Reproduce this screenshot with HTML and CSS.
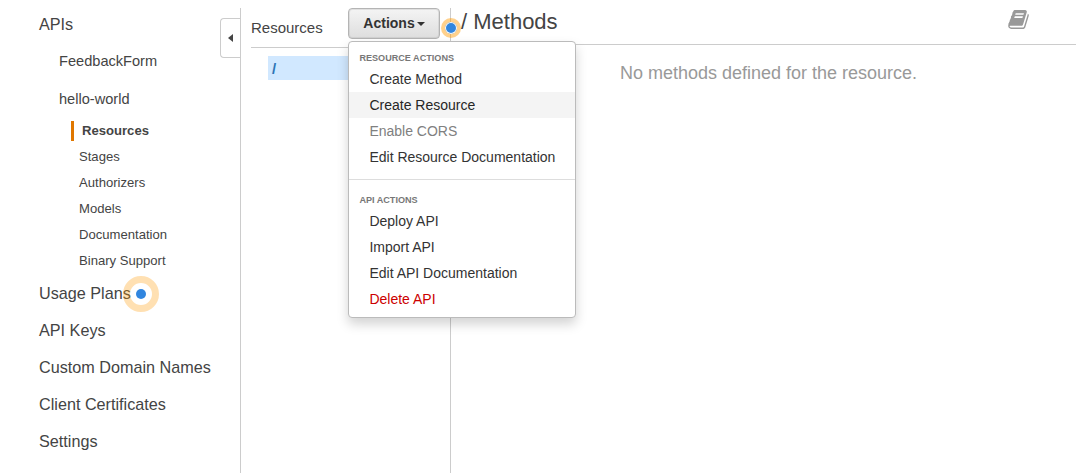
FILE: index.html
```html
<!DOCTYPE html>
<html lang="en">
<head>
<meta charset="utf-8">
<title>API Gateway</title>
<link rel="stylesheet" href="styles.css">
</head>
<body>
<div class="app">
  <nav class="sidebar">
    <a class="nav-top">APIs</a>
    <div class="api-list">
      <a class="api-name">FeedbackForm</a>
      <a class="api-name">hello-world</a>
    </div>
    <div class="api-sections">
      <a class="section active">Resources</a>
      <a class="section">Stages</a>
      <a class="section">Authorizers</a>
      <a class="section">Models</a>
      <a class="section">Documentation</a>
      <a class="section">Binary Support</a>
    </div>
    <a class="nav-top"><span class="anchor">Usage Plans<i class="hotspot hotspot-large"></i></span></a>
    <a class="nav-top">API Keys</a>
    <a class="nav-top">Custom Domain Names</a>
    <a class="nav-top">Client Certificates</a>
    <a class="nav-top">Settings</a>
    <button class="collapse" aria-label="Collapse"><i class="arrow-left"></i></button>
  </nav>
  <section class="resources">
    <header class="resources-head">
      <span class="resources-title">Resources</span>
      <div class="dropdown">
        <button class="actions">Actions<i class="caret"></i></button>
        <div class="menu">
          <div class="menu-label">RESOURCE ACTIONS</div>
          <a class="item">Create Method</a>
          <a class="item hover">Create Resource</a>
          <a class="item disabled">Enable CORS</a>
          <a class="item">Edit Resource Documentation</a>
          <div class="divider"></div>
          <div class="menu-label">API ACTIONS</div>
          <a class="item">Deploy API</a>
          <a class="item">Import API</a>
          <a class="item">Edit API Documentation</a>
          <a class="item danger">Delete API</a>
        </div>
      </div>
    </header>
    <div class="tree-node">/</div>
    <i class="hotspot hotspot-small"></i>
  </section>
  <main class="methods">
    <header class="methods-head">
      <h1 class="methods-title">/ Methods</h1>
      <svg class="book" viewBox="0 128 1664 1536"><path d="M1639 478q40 57 18 129l-275 906q-19 64-76.5 107.5t-122.5 43.5h-923q-77 0-148.5-53.5t-99.5-131.5q-24-67-2-127 0-4 3-27t4-37q1-8-3-21.5t-3-19.5q2-11 8-21t16.5-23.5 16.5-23.5q23-38 45-91.5t30-91.5q3-10 .5-30t-.5-28q3-11 17-28t17-23q21-36 42-92t25-90q1-9-2.5-32t.5-28q4-13 22-30.5t22-22.5q19-26 42.5-84.5t27.5-96.5q1-8-3-25.5t-2-26.5q2-8 9-18t18-23 17-21q8-12 16.5-30.5t15-35 16-36 19.5-32 26.5-23.5 36-11.5 47.5 5.5l-1 3q38-9 51-9h761q74 0 114 56t18 130l-274 906q-36 119-71.5 153.5t-128.5 34.5h-869q-27 0-38 15-11 16-1 43 24 70 144 70h923q29 0 56-15.5t35-41.5l300-987q7-22 5-57 38 15 59 43zm-1064 2q-4 13 2 22.5t20 9.5h608q13 0 25.5-9.5t16.5-22.5l21-64q4-13-2-22.5t-20-9.5h-608q-13 0-25.5 9.5t-16.5 22.5zm-83 256q-4 13 2 22.5t20 9.5h608q13 0 25.5-9.5t16.5-22.5l21-64q4-13-2-22.5t-20-9.5h-608q-13 0-25.5 9.5t-16.5 22.5z"/></svg>
    </header>
    <p class="empty">No methods defined for the resource.</p>
  </main>
</div>
</body>
</html>
```
FILE: styles.css
```css
* { box-sizing: border-box; }

body {
  margin: 0;
  background: #fff;
  color: #444;
  font-family: "Liberation Sans", Arial, sans-serif;
}

.app {
  display: flex;
  height: 473px;
  padding: 8px 1px 0 0;
  overflow: hidden;
}

.sidebar {
  position: relative;
  display: flex;
  flex-direction: column;
  width: 241px;
  padding-left: 39px;
  border-right: 1px solid #ccc;
}

.nav-top { font-size: 16.2px; line-height: 37px; height: 37px; flex: none; }
.nav-top:first-child { line-height: 33px; height: 34px; }

.api-list { padding-left: 20px; }
.api-name { display: block; height: 38px; line-height: 38px; font-size: 14.6px; }

.api-sections { padding: 0 0 1px 32px; }
.section {
  display: block;
  height: 26px;
  padding-left: 8px;
  font-size: 13.1px;
  line-height: 26px;
}
.section.active {
  height: 20px;
  margin: 3px 0;
  line-height: 20px;
  border-left: 3px solid #e07700;
  font-weight: bold;
}

.anchor { position: relative; }

.collapse {
  position: absolute;
  top: 10px;
  right: 0;
  display: flex;
  align-items: center;
  justify-content: center;
  width: 20px;
  height: 40px;
  padding: 0 1px 0 0;
  background: #fff;
  border: 1px solid #ccc;
  border-right: 0;
  border-radius: 4px 0 0 4px;
}
.arrow-left {
  border: 4px solid transparent;
  border-width: 4px 5px 4px 0;
  border-right-color: #444;
}

.resources {
  position: relative;
  width: 210px;
  border-right: 1px solid #ccc;
}
.resources-head {
  display: flex;
  height: 40px;
  margin-left: 10px;
  border-bottom: 1px solid #ccc;
}
.resources-title { width: 97px; font-size: 15px; line-height: 40px; }

.dropdown { position: relative; z-index: 2; }
.actions {
  display: flex;
  align-items: center;
  justify-content: center;
  gap: 2px;
  width: 92px;
  height: 31px;
  padding: 0 0 1px;
  border: 1px solid #b4b4b4;
  border-radius: 4px;
  background: linear-gradient(#f4f4f4, #dedede);
  box-shadow: inset 0 0 0 1px rgba(180, 180, 180, .3);
  color: #333;
  font: bold 14px "Liberation Sans", Arial, sans-serif;
}
.caret {
  margin-top: 2px;
  border: 4px solid transparent;
  border-top-color: #333;
  border-bottom: 0;
}

.menu {
  position: absolute;
  top: 33px;
  left: 0;
  width: 228px;
  height: 277px;
  padding: 9px 0 0;
  border: 1px solid #bbb;
  border-radius: 4px;
  background: #fff;
  box-shadow: 0 6px 12px rgba(0, 0, 0, .175);
}
.menu-label {
  height: 15px;
  padding-left: 10.4px;
  color: #777;
  font-size: 9.1px;
  font-weight: bold;
  line-height: 15px;
}
.item {
  display: block;
  height: 26px;
  padding-left: 20.4px;
  color: #333;
  font-size: 14px;
  line-height: 26px;
  white-space: nowrap;
}
.item.hover { background: #f4f4f4; color: #262626; }
.item.disabled { color: #808080; }
.item.danger { color: #c00; }
.divider { height: 1px; margin: 9px 0 13px; background: #ddd; }

.tree-node {
  height: 24px;
  margin: 8px 0 0 27px;
  padding-left: 4px;
  background: #d1e8ff;
  color: #2d74b5;
  font-size: 15px;
  font-weight: bold;
  line-height: 25px;
}

/* Pulsing tour markers */
.hotspot {
  position: absolute;
  border-radius: 50%;
}
.hotspot-large {
  top: -8px;
  left: 84px;
  width: 36px;
  height: 36px;
  border: 7px solid rgba(255, 153, 0, .3);
}
.hotspot-large::after {
  content: "";
  position: absolute;
  inset: 6px;
  border-radius: 50%;
  background: #3186df;
}
.hotspot-small {
  z-index: 1;
  top: 10px;
  left: 200px;
  width: 20px;
  height: 20px;
  border: 4px solid rgba(255, 153, 0, .45);
  background: #3186df;
  background-clip: padding-box;
  box-shadow: inset 0 0 0 1px #fff;
}

.methods { flex: 1; }
.methods-head {
  display: flex;
  justify-content: space-between;
  height: 37px;
  padding: 0 47px 0 10px;
  border-bottom: 1px solid #ccc;
}
.methods-title { margin: 0; font-size: 22px; font-weight: normal; line-height: 27px; }
.book { width: 21px; height: 19px; margin-top: 2px; fill: #999; }
.empty {
  margin: 16px 0 0;
  padding-left: 10px;
  color: #999;
  font-size: 18px;
  line-height: 24px;
  text-align: center;
}
```
